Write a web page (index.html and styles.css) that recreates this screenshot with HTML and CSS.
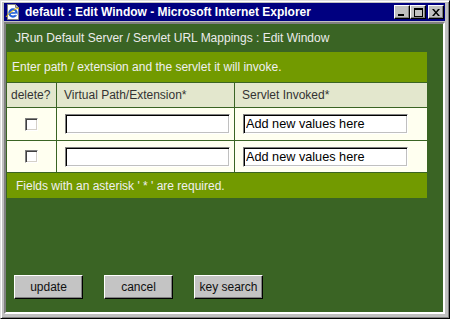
FILE: index.html
```html
<!DOCTYPE html>
<html>
  <head>
    <meta charset="utf-8" />
    <link rel="stylesheet" href="styles.css">
  </head>

  <body class="ie-body">
    <div class="ie-window">
      <div class="ie-titlebar">
        <svg class="ie-titlebar-icon" width="16" height="16" viewBox="0 0 16 16">
          <path d="M2.5 0.5h8l3 3v12h-11z" fill="#fff" stroke="#808080" />
          <path d="M10.5 0.5v3h3" fill="#c0c0c0" stroke="#808080" />
          <circle cx="8" cy="9" r="3.6" fill="none" stroke="#1f5fd8" stroke-width="2.2" />
          <path d="M4.6 9h6.8" stroke="#1f5fd8" stroke-width="1.6" />
          <path d="M10.2 10.4h2" stroke="#fff" stroke-width="1.6" />
          <path d="M1 13c2-3 8-8 13-9" fill="none" stroke="#e8b800" stroke-width="1" />
        </svg>
        <span class="ie-titlebar-text">default : Edit Window - Microsoft Internet Explorer</span>
        <div class="ie-titlebar-controls">
          <button class="ie-caption-button">
            <svg width="8" height="7" viewBox="0 0 8 7"><path d="M0 5h6v2H0z" /></svg>
          </button>
          <button class="ie-caption-button">
            <svg width="9" height="9" viewBox="0 0 9 9"><path d="M0 0h9v9H0zM1 2v6h7V2z" fill-rule="evenodd" /></svg>
          </button>
          <button class="ie-caption-button ie-caption-button-close">
            <svg width="8" height="7" viewBox="0 0 8 7">
              <path d="M0 0h2l2 2.5L6 0h2L5 3.5 8 7H6L4 4.5 2 7H0l3-3.5z" />
            </svg>
          </button>
        </div>
      </div>

      <div class="ie-client">
        <div class="jrun-page-heading">JRun Default Server / Servlet URL Mappings : Edit Window</div>

        <div class="jrun-map-grid">
          <div class="jrun-map-caption">Enter path / extension and the servlet it will invoke.</div>

          <div class="jrun-map-head jrun-map-head-first">delete?</div>
          <div class="jrun-map-head">Virtual Path/Extension*</div>
          <div class="jrun-map-head">Servlet Invoked*</div>

          <div class="jrun-map-cell jrun-map-cell-check"><input type="checkbox" class="jrun-checkbox" /></div>
          <div class="jrun-map-cell"><input type="text" class="jrun-text-input" /></div>
          <div class="jrun-map-cell"><input type="text" class="jrun-text-input" value="Add new values here" /></div>

          <div class="jrun-map-cell jrun-map-cell-check"><input type="checkbox" class="jrun-checkbox" /></div>
          <div class="jrun-map-cell"><input type="text" class="jrun-text-input" /></div>
          <div class="jrun-map-cell"><input type="text" class="jrun-text-input" value="Add new values here" /></div>

          <div class="jrun-map-footer">Fields with an asterisk ' * ' are required.</div>
        </div>

        <div class="jrun-actions">
          <button class="jrun-button">update</button>
          <button class="jrun-button">cancel</button>
          <button class="jrun-button">key search</button>
        </div>
      </div>
    </div>
  </body>
</html>
```

FILE: styles.css
```css
:root {
  --font: "Liberation Sans", Arial, sans-serif;
  --frame-gray: #c0c0c0;
  --page-green: #3a6424;
  --olive: #729a00;
}

body {
  font-family: var(--font);
}

.ie-body {
  margin: 0;
  background: #fff;
}

.ie-window {
  box-sizing: border-box;
  width: 450px;
  height: 319px;
  display: flex;
  flex-direction: column;
  background-color: var(--frame-gray);
  border-style: solid;
  border-width: 1px;
  border-color: #dfdfdf #000 #000 #dfdfdf;
  box-shadow: inset 1px 1px #fff, inset -1px -1px #808080;
  padding: 2px 4px 4px 3px;
}

.ie-titlebar {
  display: flex;
  align-items: center;
  height: 18px;
  flex: 0 0 auto;
  background-color: #000080;
  color: #fff;
}

.ie-titlebar-icon {
  margin-left: 1px;
  flex: 0 0 auto;
}

.ie-titlebar-text {
  margin-left: 4px;
  font-family: var(--font);
  font-size: 12px;
  font-weight: bold;
  white-space: nowrap;
}

.ie-titlebar-controls {
  display: flex;
  margin-left: auto;
  margin-right: 1px;
}

.ie-caption-button {
  box-sizing: border-box;
  width: 16px;
  height: 14px;
  padding: 0;
  margin: 0;
  display: inline-flex;
  align-items: center;
  justify-content: center;
  background-color: var(--frame-gray);
  border-style: solid;
  border-width: 1px;
  border-color: #fff #000 #000 #fff;
  box-shadow: inset -1px -1px #808080;
}

.ie-caption-button svg {
  fill: #000;
}

.ie-caption-button-close {
  margin-left: 2px;
}

.ie-client {
  flex: 1 1 auto;
  margin-top: 1px;
  display: flex;
  flex-direction: column;
  background-color: var(--page-green);
  border-style: solid;
  border-width: 2px;
  border-color: #808080 #fff #fff #808080;
}

.jrun-page-heading {
  height: 27px;
  line-height: 28px;
  padding-left: 9px;
  font-size: 12px;
  color: #ececec;
}

.jrun-map-grid {
  display: grid;
  grid-template-columns: 49px 177px 192px;
  grid-template-rows: 30px 24px 32px 31px 25px;
  gap: 1px;
  padding: 1px;
  width: max-content;
  background-color: var(--page-green);
}

.jrun-map-caption,
.jrun-map-footer {
  grid-column: 1 / 4;
  display: flex;
  align-items: center;
  background-color: var(--olive);
  color: #f0f0f0;
  font-size: 12px;
}

.jrun-map-caption {
  padding-left: 5px;
}

.jrun-map-footer {
  padding-left: 9px;
}

.jrun-map-head {
  display: flex;
  align-items: center;
  padding-left: 7px;
  background-color: #e3e7cd;
  color: #333;
  font-size: 12px;
}

.jrun-map-head-first {
  padding-left: 4px;
}

.jrun-map-cell {
  display: flex;
  align-items: center;
  padding-left: 8px;
  background-color: #fffff0;
}

.jrun-map-cell-check {
  padding-left: 0;
  justify-content: center;
}

.jrun-checkbox {
  -webkit-appearance: none;
  appearance: none;
  box-sizing: border-box;
  width: 13px;
  height: 13px;
  margin: 0;
  background-color: #fff;
  border-style: solid;
  border-width: 1px;
  border-color: #808080 #fff #fff #808080;
  box-shadow: inset 1px 1px #404040, inset -1px -1px #d4d0c8;
}

.jrun-text-input {
  box-sizing: border-box;
  width: 165px;
  height: 20px;
  margin: 0;
  padding: 0 2px;
  font-family: var(--font);
  font-size: 12.7px;
  color: #000;
  background-color: #fff;
  border-style: solid;
  border-width: 1px;
  border-color: #808080 #fff #fff #808080;
  box-shadow: inset 1px 1px #000, inset -1px -1px #c0c0c0;
  outline: 0;
}

.jrun-actions {
  display: flex;
  gap: 21px;
  margin-top: 76px;
  padding-left: 8px;
}

.jrun-button {
  box-sizing: border-box;
  width: 69px;
  height: 24px;
  padding: 0;
  margin: 0;
  font-family: var(--font);
  font-size: 12px;
  color: #111;
  background-color: #c4c4c4;
  border-style: solid;
  border-width: 1px;
  border-color: #fff #000 #000 #fff;
  box-shadow: inset -1px -1px #808080;
}
```
